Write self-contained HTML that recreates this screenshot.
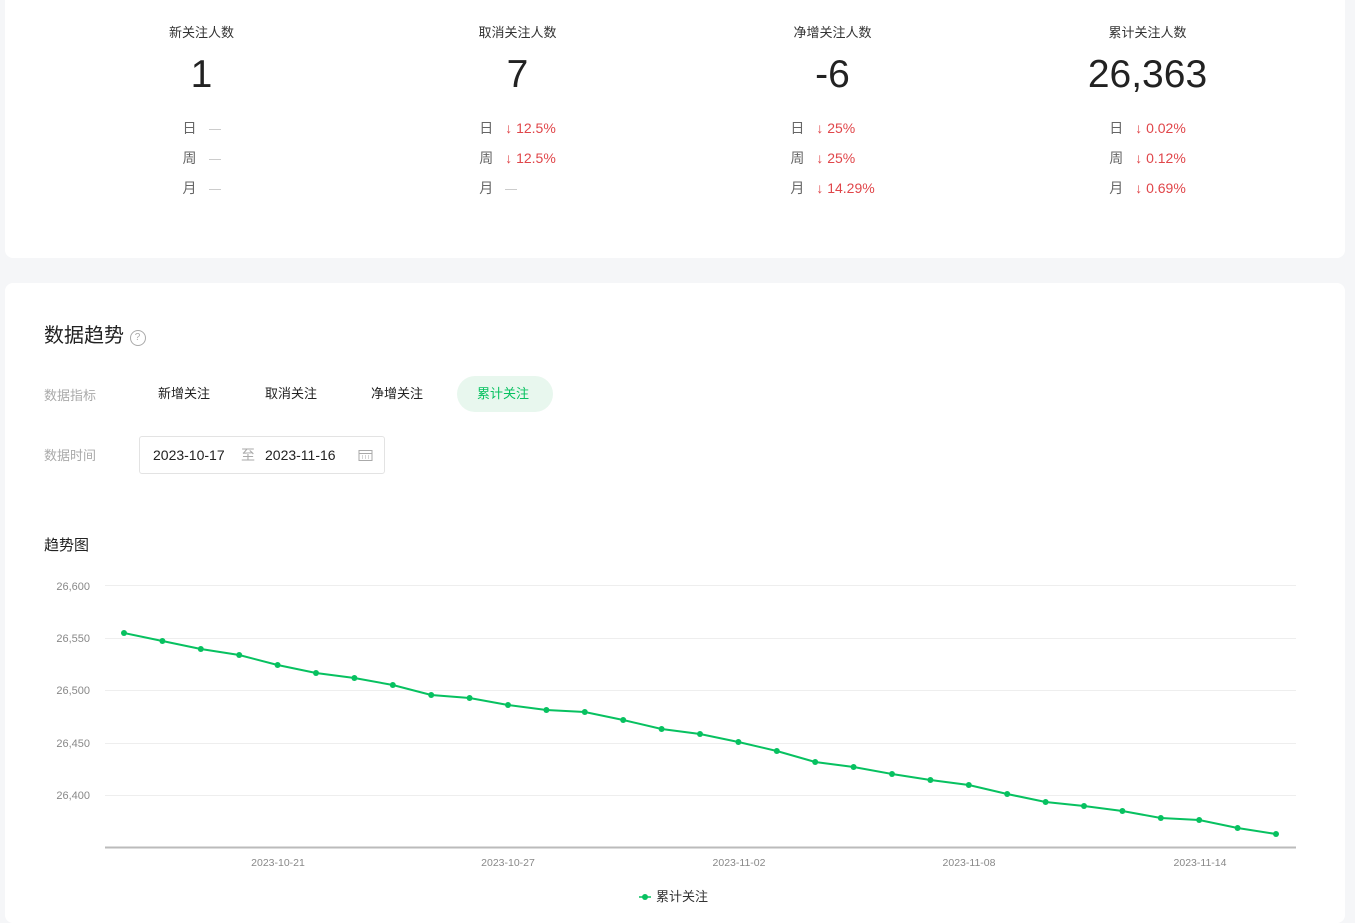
<!DOCTYPE html>
<html><head><meta charset="utf-8"><style>
body{margin:0;background:#f5f6f8;width:1355px;height:904px;overflow:hidden;font-family:"Liberation Sans","Noto Sans CJK SC",sans-serif;color:#333}
.card{position:absolute;left:5px;width:1340px;background:#fff;border-radius:8px}
.col{position:absolute;top:0;width:315px;text-align:center}
.t{position:absolute;top:22px;width:100%;font-size:13px;color:#333}
.n{position:absolute;top:52px;width:100%;font-size:39px;line-height:46px;color:#222}
.sub{position:absolute;top:113px;left:0;width:100%;text-align:center}
.sub div.b{display:inline-block;text-align:left;font-size:14px;line-height:30px}
.l{color:#666;margin-right:12px}
.r{color:#e0464a}
.r:before{content:"";}
.d{display:inline-block;width:12px;height:1px;background:#ccc;vertical-align:middle}
.lab{position:absolute;font-size:13px;color:#aaa}
.tab{position:absolute;top:376px;height:36px;line-height:36px;font-size:13px;color:#222;padding:0 20px}
</style></head><body>
<div class="card" style="top:-10px;height:268px">
 <div class="col" style="left:39px;top:10px"><div class="t">新关注人数</div><div class="n">1</div><div class="sub"><div class="b"><span class="l">日</span><span class="d"></span><br><span class="l">周</span><span class="d"></span><br><span class="l">月</span><span class="d"></span></div></div></div>
 <div class="col" style="left:355px;top:10px"><div class="t">取消关注人数</div><div class="n">7</div><div class="sub"><div class="b"><span class="l">日</span><span class="r">↓ 12.5%</span><br><span class="l">周</span><span class="r">↓ 12.5%</span><br><span class="l">月</span><span class="d"></span></div></div></div>
 <div class="col" style="left:670px;top:10px"><div class="t">净增关注人数</div><div class="n">-6</div><div class="sub"><div class="b"><span class="l">日</span><span class="r">↓ 25%</span><br><span class="l">周</span><span class="r">↓ 25%</span><br><span class="l">月</span><span class="r">↓ 14.29%</span></div></div></div>
 <div class="col" style="left:985px;top:10px"><div class="t">累计关注人数</div><div class="n">26,363</div><div class="sub"><div class="b"><span class="l">日</span><span class="r">↓ 0.02%</span><br><span class="l">周</span><span class="r">↓ 0.12%</span><br><span class="l">月</span><span class="r">↓ 0.69%</span></div></div></div>
</div>
<div class="card" style="top:283px;height:640px"></div>
<div style="position:absolute;left:44px;top:319px;font-size:20px;color:#222">数据趋势 <span style="display:inline-block;width:14px;height:14px;border:1px solid #aaa;border-radius:50%;font-size:10px;line-height:14px;text-align:center;color:#aaa;vertical-align:2px">?</span></div>
<div class="lab" style="left:44px;top:385px">数据指标</div>
<div class="tab" style="left:138px">新增关注</div>
<div class="tab" style="left:245px">取消关注</div>
<div class="tab" style="left:351px">净增关注</div>
<div class="tab" style="left:457px;background:#e8f7ee;color:#07c160;border-radius:18px;width:56px">累计关注</div>
<div class="lab" style="left:44px;top:445px">数据时间</div>
<div style="position:absolute;left:139px;top:436px;width:244px;height:36px;border:1px solid #e3e3e3;border-radius:3px;font-size:14px;line-height:36px;color:#222">
 <span style="position:absolute;left:13px">2023-10-17</span><span style="position:absolute;left:101px;color:#aaa">至</span><span style="position:absolute;left:125px">2023-11-16</span>
 <svg style="position:absolute;left:218px;top:12px" width="15" height="13" viewBox="0 0 15 13"><rect x="1" y="1.5" width="13" height="10" fill="none" stroke="#aaa"/><path d="M1 4.5h13M4 7h1M7 7h1M10 7h1M4 9h1M7 9h1M10 9h1" stroke="#aaa"/></svg>
</div>
<div style="position:absolute;left:44px;top:534px;font-size:15px;color:#222">趋势图</div>
<svg style="position:absolute;left:0;top:0" width="1355" height="904">
<g stroke="#eee" stroke-width="1"><path d="M105 585.5H1296M105 638.5H1296M105 690.5H1296M105 743.5H1296M105 795.5H1296"/></g>
<path d="M105 847.5H1296" stroke="#bbb" stroke-width="2"/>
<g font-size="11" fill="#888" text-anchor="end" font-family="Liberation Sans"><text x="90" y="590">26,600</text><text x="90" y="642">26,550</text><text x="90" y="694">26,500</text><text x="90" y="747">26,450</text><text x="90" y="799">26,400</text></g>
<g font-size="10.5" fill="#888" text-anchor="middle" font-family="Liberation Sans"><text x="278" y="866">2023-10-21</text><text x="508" y="866">2023-10-27</text><text x="739" y="866">2023-11-02</text><text x="969" y="866">2023-11-08</text><text x="1200" y="866">2023-11-14</text></g>
<polyline fill="none" stroke="#07c160" stroke-width="2" points="124,633 162.4,641 200.8,649 239.2,655 277.6,665 316,673 354.4,678 392.8,685 431.2,695 469.6,698 508,705 546.4,710 584.8,712 623.2,720 661.6,729 700,734 738.4,742 776.8,751 815.2,762 853.6,767 892,774 930.4,780 968.8,785 1007.2,794 1045.6,802 1084,806 1122.4,811 1160.8,818 1199.2,820 1237.6,828 1276,834"/>
<g fill="#07c160"><circle cx="124" cy="633" r="3"/><circle cx="162.4" cy="641" r="3"/><circle cx="200.8" cy="649" r="3"/><circle cx="239.2" cy="655" r="3"/><circle cx="277.6" cy="665" r="3"/><circle cx="316" cy="673" r="3"/><circle cx="354.4" cy="678" r="3"/><circle cx="392.8" cy="685" r="3"/><circle cx="431.2" cy="695" r="3"/><circle cx="469.6" cy="698" r="3"/><circle cx="508" cy="705" r="3"/><circle cx="546.4" cy="710" r="3"/><circle cx="584.8" cy="712" r="3"/><circle cx="623.2" cy="720" r="3"/><circle cx="661.6" cy="729" r="3"/><circle cx="700" cy="734" r="3"/><circle cx="738.4" cy="742" r="3"/><circle cx="776.8" cy="751" r="3"/><circle cx="815.2" cy="762" r="3"/><circle cx="853.6" cy="767" r="3"/><circle cx="892" cy="774" r="3"/><circle cx="930.4" cy="780" r="3"/><circle cx="968.8" cy="785" r="3"/><circle cx="1007.2" cy="794" r="3"/><circle cx="1045.6" cy="802" r="3"/><circle cx="1084" cy="806" r="3"/><circle cx="1122.4" cy="811" r="3"/><circle cx="1160.8" cy="818" r="3"/><circle cx="1199.2" cy="820" r="3"/><circle cx="1237.6" cy="828" r="3"/><circle cx="1276" cy="834" r="3"/></g>
<path d="M639 897h12" stroke="#07c160" stroke-width="1.5"/><circle cx="645" cy="897" r="3" fill="#07c160"/>
<text x="656" y="901" font-size="13" fill="#333" font-family="Liberation Sans,Noto Sans CJK SC">累计关注</text>
</svg>
</body></html>
